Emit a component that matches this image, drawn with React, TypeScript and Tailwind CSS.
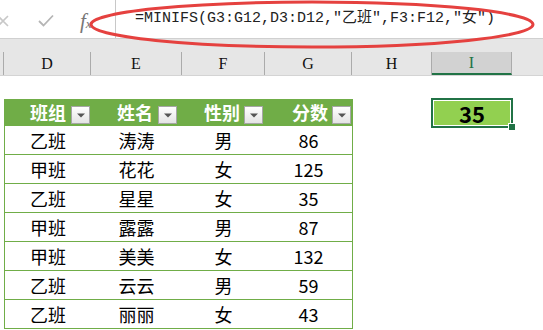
import React from "react";

const rows = [
  ["乙班", "涛涛", "男", "86"],
  ["甲班", "花花", "女", "125"],
  ["乙班", "星星", "女", "35"],
  ["甲班", "露露", "男", "87"],
  ["甲班", "美美", "女", "132"],
  ["乙班", "云云", "男", "59"],
  ["乙班", "丽丽", "女", "43"],
];

const cjk = { fontFamily: '"Noto Sans CJK SC", "Noto Sans", sans-serif' };

function Drop() {
  return (
    <div className="w-[19px] h-[18px] border border-[#a6a6a6] bg-gradient-to-b from-white to-[#e4e4e4] flex items-center justify-center self-end mb-[2px] shrink-0">
      <svg width="8" height="5" viewBox="0 0 8 5">
        <path d="M0 0.5 L8 0.5 L4 4.5 Z" fill="#555" />
      </svg>
    </div>
  );
}

export default function App() {
  return (
    <div className="relative w-[543px] h-[330px] overflow-hidden bg-white">
      {/* formula bar */}
      <div className="flex h-[39px] border-b border-[#d0d0d0] bg-white">
        <div className="w-[116px] border-r border-[#c8c8c8] relative flex items-center">
          <svg className="absolute left-[-3px] top-[15px]" width="12" height="12" viewBox="0 0 12 12">
            <path d="M1 1 L11 11 M11 1 L1 11" stroke="#c8c8c8" strokeWidth="1.6" />
          </svg>
          <svg className="absolute left-[38px] top-[14px]" width="16" height="13" viewBox="0 0 16 13">
            <path d="M1 7 L5.5 11.5 L15 1.5" stroke="#b5b5b5" strokeWidth="1.8" fill="none" />
          </svg>
          <span
            className="absolute left-[80px] top-[6px] text-[21px] italic text-[#777] flex items-baseline"
            style={{ fontFamily: '"Liberation Serif", serif' }}
          >
            f<span className="text-[13px]">x</span>
          </span>
        </div>
        <div
          className="flex-1 flex items-center pl-[19px] text-[15px] text-[#222] whitespace-nowrap"
          style={{ fontFamily: '"Liberation Mono", "Noto Sans CJK SC", monospace' }}
        >
          =MINIFS(G3:G12,D3:D12,"乙班",F3:F12,"女")
        </div>
      </div>

      {/* column headers */}
      <div className="bg-[#e6e6e6] pt-[13px] border-b border-[#d4d4d4]">
        <div
          className="flex h-[23px] text-[16px] text-[#111]"
          style={{ fontFamily: '"Liberation Serif", serif' }}
        >
          <div className="w-[4px] border-r border-[#ababab]" />
          {[
            ["D", 87],
            ["E", 91],
            ["F", 83],
            ["G", 87],
            ["H", 80],
          ].map(([l, w]) => (
            <div
              key={l as string}
              className="border-r border-[#ababab] flex items-center justify-center"
              style={{ width: w as number }}
            >
              {l}
            </div>
          ))}
          <div className="w-[80px] border-r border-[#ababab] bg-[#d2d2d2] border-b-2 border-b-[#217346] flex items-center justify-center text-[#217346]">
            I
          </div>
          <div className="flex-1" />
        </div>
      </div>

      {/* body */}
      <div className="flex">
        <div className="ml-[4px] mt-[23px] w-[349px] border-x border-[#70ad47]" style={cjk}>
          <div className="flex h-[27px] bg-[#70ad47] text-white font-bold text-[18px]">
            <div className="w-[86px] flex items-center justify-end gap-[5px] pr-[1px]">
              <span>班组</span>
              <Drop />
            </div>
            <div className="w-[91px] flex items-center justify-end gap-[5px] pr-[5px]">
              <span>姓名</span>
              <Drop />
            </div>
            <div className="w-[83px] flex items-center justify-end gap-[4px] pr-[2px]">
              <span>性别</span>
              <Drop />
            </div>
            <div className="w-[87px] flex items-center justify-end gap-[4px] pr-[1px]">
              <span>分数</span>
              <Drop />
            </div>
          </div>
          {rows.map((r, i) => (
            <div key={i} className="flex h-[29px] border-b border-[#70ad47] text-[18px] text-black">
              <div className="w-[86px] flex items-center justify-center">{r[0]}</div>
              <div className="w-[91px] flex items-center justify-center">{r[1]}</div>
              <div className="w-[83px] flex items-center justify-center">{r[2]}</div>
              <div className="w-[87px] flex items-center justify-center">{r[3]}</div>
            </div>
          ))}
        </div>
        <div className="ml-[78px] mt-[22px] relative w-[82px] h-[30px] border-2 border-[#217346]">
          <div
            className="w-full h-full border border-white bg-[#92d050] flex items-center justify-center text-[22px] font-bold text-black"
            style={cjk}
          >
            35
          </div>
          <div className="absolute right-[-5px] bottom-[-5px] w-[8px] h-[8px] bg-[#217346] border border-white" />
        </div>
      </div>

      {/* red ellipse annotation */}
      <svg className="absolute left-0 top-0 pointer-events-none" width="543" height="60">
        <ellipse cx="312" cy="24.5" rx="221" ry="22.5" fill="none" stroke="#e5413f" strokeWidth="3" />
      </svg>
    </div>
  );
}
